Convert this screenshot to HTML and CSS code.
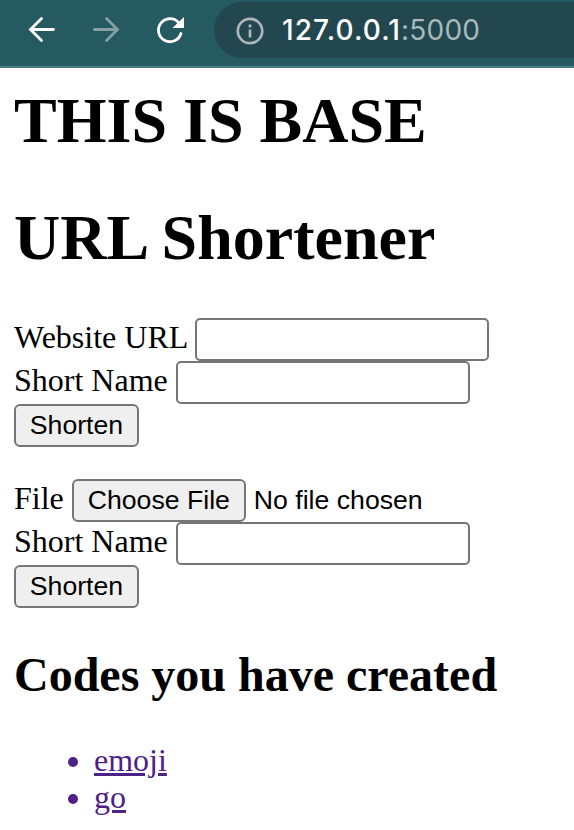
FILE: index.html
```html
<!DOCTYPE html>
<html lang="en">
<head>
<meta charset="utf-8">
<title>URL Shortener</title>
<link rel="stylesheet" href="styles.css">
</head>
<body>
<header class="toolbar">
  <svg class="icon back" viewBox="0 0 32 32"><path d="M27.500 15.500H4.500M15.500 4.500L4.500 15.500l11 11"/></svg>
  <svg class="icon forward" viewBox="0 0 32 32"><path d="M4.500 15.500H27M16.500 4.500l11 11-11 11"/></svg>
  <svg class="icon reload" viewBox="0 0 32 32"><path d="M27 19.500A11.500 11.500 0 1 1 24.500 8.500"/><path class="solid" d="M30 3v11H18.500z"/></svg>
  <div class="address">
    <svg class="info" viewBox="0 0 28 28"><circle cx="14" cy="14" r="12.200"/><path d="M14 12.500v8M14 7.500v3"/></svg>
    <span class="url">127.0.0.1<span class="port">:5000</span></span>
  </div>
</header>
<main class="page">
  <h1 class="title"><span>THIS IS BASE</span></h1>
  <h1 class="title second"><span>URL Shortener</span></h1>
  <form class="form">
    <div class="row"><label class="label website" for="url">Website URL</label><input id="url" class="field" type="text"></div>
    <div class="row"><label class="label" for="name">Short Name</label><input id="name" class="field" type="text"></div>
    <div class="row"><button class="button" type="button">Shorten</button></div>
  </form>
  <form class="form files">
    <div class="row"><span class="label">File</span><button class="button choose" type="button">Choose File</button><span class="status">No file chosen</span></div>
    <div class="row"><label class="label" for="file-name">Short Name</label><input id="file-name" class="field" type="text"></div>
    <div class="row"><button class="button" type="button">Shorten</button></div>
  </form>
  <h2 class="subtitle">Codes you have created</h2>
  <ul class="codes">
    <li><a href="#emoji">emoji</a></li>
    <li><a href="#go">go</a></li>
  </ul>
</main>
</body>
</html>
```
FILE: styles.css
```css
* { box-sizing: border-box; }
body { margin: 0; background: #fff; color: #000; font: 32px/37px "Liberation Serif", "Times New Roman", serif; overflow: hidden; }
.toolbar { height: 68px; padding: 2px 0 8px 26px; display: flex; align-items: center; background: #255a60; border-bottom: 2px solid #4b7b80; }
.icon { width: 32px; height: 32px; flex: none; fill: none; stroke: #fff; stroke-width: 2.8; stroke-linecap: round; }
.back { margin-left: 0; }
.forward { margin-left: 32px; stroke: #84a1a5; }
.reload { margin-left: 32px; }
.solid { fill: #fff; stroke: none; }
.address { margin-left: 28px; flex: 1; height: 56px; border-radius: 28px 0 0 28px; background: #22474e; display: flex; align-items: center; padding-left: 22px; }
.info { width: 28px; height: 28px; margin-top: 1px; flex: none; fill: none; stroke: #b0b5b9; stroke-width: 2.7; }
.url { margin-left: 18px; color: #fff; font: 500 28px/34px Inter, sans-serif; letter-spacing: 1.1px; white-space: nowrap; }
.port { color: #a6babc; font-weight: 400; letter-spacing: 0.2px; }
.page { padding: 16px 14px 0; }
.title { margin: 0; font-size: 64px; line-height: 74px; white-space: nowrap; }
.second { margin-top: 43px; }
.form { margin: 43px 0 0; }
.files { margin-top: 32px; }
.row { display: flex; height: 43px; align-items: center; gap: 8px; white-space: nowrap; }
.label { padding-bottom: 4px; }
.website { margin-right: -1px; }
.field { width: 294px; height: 43px; margin: 0; border: 2px solid #767676; border-radius: 5px; background: #fff; }
.button { height: 43px; width: 125px; padding: 0; border: 2px solid #767676; border-radius: 6px; background: #efefef; color: #000; font: 26.667px/31px "Liberation Sans", Arial, sans-serif; }
.choose { width: 174px; }
.status { font: 26.667px/31px "Liberation Sans", Arial, sans-serif; }
.subtitle { margin: 39px 0 0; font-size: 48px; line-height: 55px; white-space: nowrap; }
.codes { margin: 40px 0 0; padding-left: 80px; color: #4d2188; }
.codes a { color: #4d2188; text-decoration-thickness: 3px; text-underline-offset: 2px; }
```
